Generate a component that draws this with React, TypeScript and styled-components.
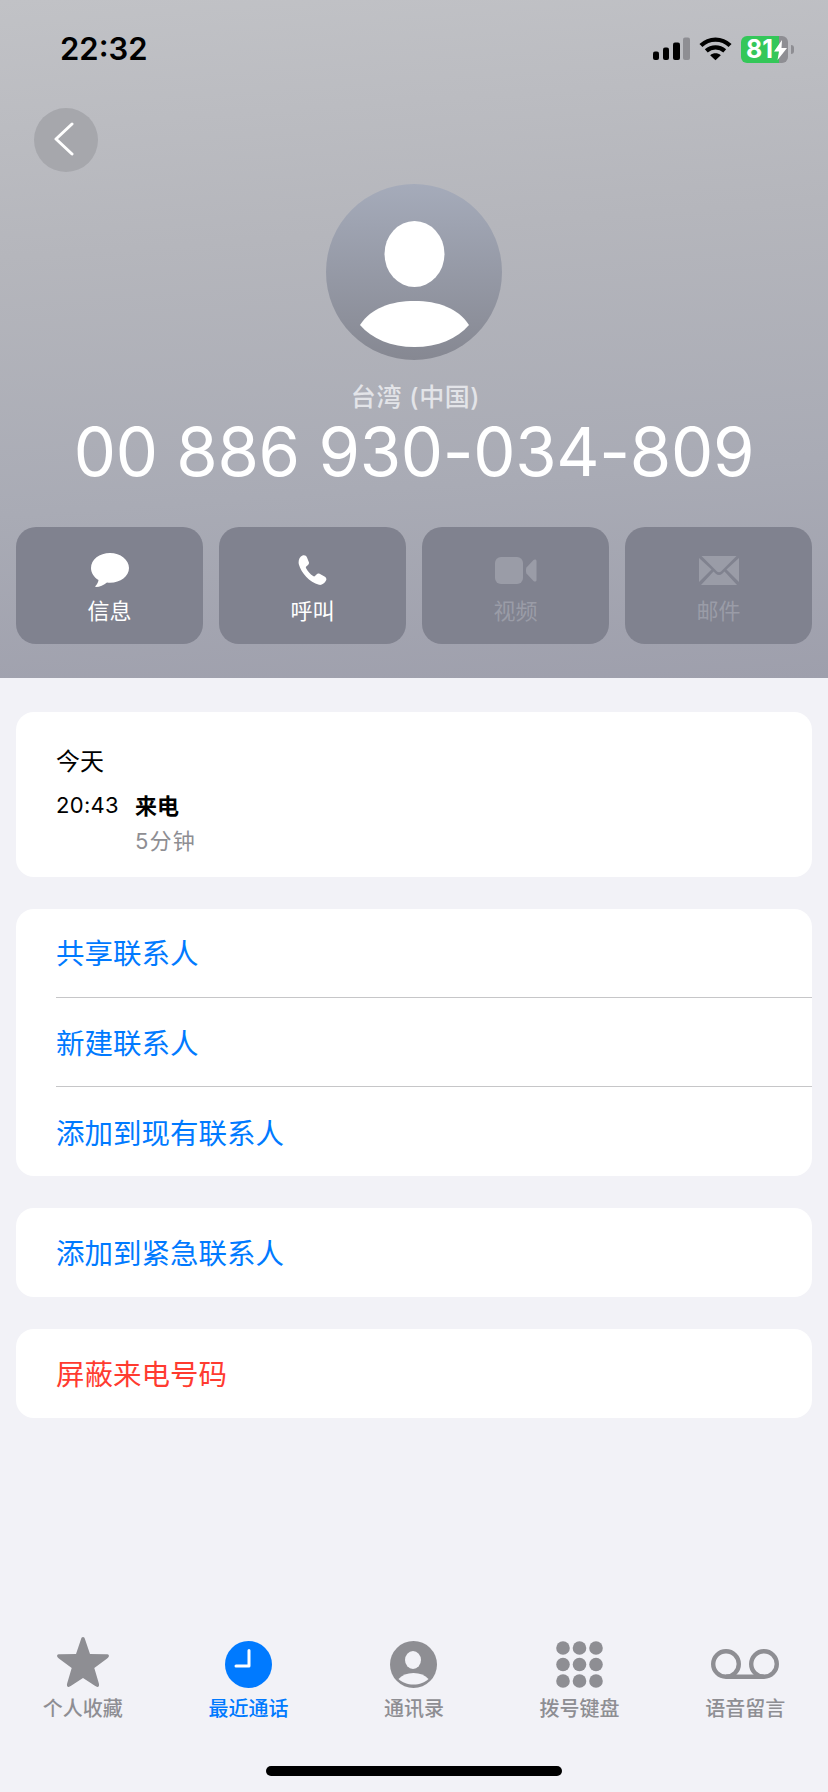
import React from "react";
import styled, { createGlobalStyle } from "styled-components";

const Global = createGlobalStyle`
  html, body { margin: 0; padding: 0; background: #f2f2f7; }
  * { box-sizing: border-box; }
  body { font-family: "Inter", "Noto Sans CJK SC", sans-serif; }
`;

const Page = styled.div`
  width: 828px;
  height: 1792px;
  display: flex;
  flex-direction: column;
  background: #f2f2f7;
  overflow: hidden;
`;

const Header = styled.header`
  height: 678px;
  flex: none;
  display: flex;
  flex-direction: column;
  background: linear-gradient(176deg, #c1c2c6 0%, #b5b6bc 35%, #a9abb5 70%, #9e9fac 100%);
`;

const StatusBar = styled.div`
  height: 108px;
  flex: none;
  padding: 29px 34px 0 60px;
  display: flex;
  justify-content: space-between;
  align-items: flex-start;
`;

const Clock = styled.span`
  font-size: 31px;
  line-height: 40px;
  font-weight: 600;
  color: #000;
`;

const StatusIcons = styled.div`
  display: flex;
  align-items: flex-start;
  padding-top: 7px;
  padding-right: 6px;
  gap: 9px;
`;

const SignalIcon = styled.svg`
  margin-top: 1px;
`;

const Battery = styled.div`
  position: relative;
  width: 47px;
  height: 27px;
  border-radius: 6px;
  background: linear-gradient(90deg, #34c759 0 81%, #8e8e93 81% 100%);
  color: #fff;
  font-size: 25px;
  line-height: 27px;
  font-weight: 700;
  padding-left: 5px;
  &::after {
    content: "";
    position: absolute;
    right: -6px;
    top: 9px;
    width: 3px;
    height: 9px;
    border-radius: 0 3px 3px 0;
    background: #8e8e93;
  }
`;

const BoltIcon = styled.svg`
  position: absolute;
  right: 1px;
  top: 4px;
`;

const BackButton = styled.button`
  width: 64px;
  height: 64px;
  flex: none;
  margin-left: 34px;
  padding: 0 5px 2px 0;
  border: none;
  border-radius: 50%;
  background: #a6a7ac;
  display: flex;
  align-items: center;
  justify-content: center;
`;

const Avatar = styled.div`
  width: 176px;
  height: 176px;
  flex: none;
  margin: 12px auto 0;
  border-radius: 50%;
  overflow: hidden;
  background: linear-gradient(180deg, #a5abba 0%, #868892 100%);
`;

const Region = styled.div`
  margin-top: 19px;
  height: 36px;
  padding-left: 3px;
  text-align: center;
  font-size: 25px;
  line-height: 36px;
  font-weight: 500;
  letter-spacing: 0.6px;
  color: #e3e4e8;
`;

const PhoneNumber = styled.div`
  height: 77px;
  text-align: center;
  font-size: 67px;
  line-height: 74px;
  font-weight: 400;
  letter-spacing: -0.3px;
  color: #fff;
  white-space: nowrap;
`;

const Actions = styled.div`
  margin-top: 35px;
  padding: 0 16px;
  display: grid;
  grid-template-columns: repeat(4, 1fr);
  gap: 16px;
`;

const ActionCard = styled.div<{ $off?: boolean }>`
  height: 117px;
  border-radius: 20px;
  background: #80828f;
  display: flex;
  flex-direction: column;
  align-items: center;
  color: ${(p) => (p.$off ? "#9a9ca7" : "#fff")};
`;

const ActionIcon = styled.div`
  height: 62px;
  padding-top: 24px;
  display: flex;
  align-items: center;
  justify-content: center;
`;

const ActionLabel = styled.span`
  margin-top: 8px;
  font-size: 22px;
  line-height: 28px;
`;

const Main = styled.main`
  flex: 1;
  padding: 34px 16px 0;
  display: flex;
  flex-direction: column;
  gap: 32px;
`;

const Card = styled.section`
  background: #fff;
  border-radius: 18px;
  overflow: hidden;
`;

const CallCard = styled(Card)`
  height: 165px;
  padding: 34px 40px 0;
`;

const CallDay = styled.div`
  font-size: 24px;
  line-height: 32px;
  color: #000;
`;

const CallLine = styled.div`
  margin-top: 11px;
  display: flex;
  align-items: flex-start;
`;

const CallTime = styled.span`
  width: 79px;
  font-size: 22px;
  line-height: 32px;
  letter-spacing: 0.3px;
  color: #000;
`;

const CallInfo = styled.div`
  display: flex;
  flex-direction: column;
  gap: 3px;
  padding-top: 1px;
`;

const CallKind = styled.span`
  font-size: 22px;
  line-height: 32px;
  font-weight: 700;
  color: #000;
`;

const CallLength = styled.span`
  font-size: 22px;
  line-height: 32px;
  color: #8e8e93;
  letter-spacing: 1.2px;
`;

const Row = styled.div<{ $danger?: boolean }>`
  height: 89px;
  margin-left: 40px;
  padding-bottom: 3px;
  display: flex;
  align-items: center;
  font-size: 28.500px;
  color: ${(p) => (p.$danger ? "#ff3b30" : "#007aff")};
  &:first-child:not(:last-child) {
    height: 88px;
  }
  & + & {
    padding-bottom: 1px;
    border-top: 1px solid #c6c6c8;
  }
  & + &:last-child {
    height: 90px;
  }
`;

const TabBar = styled.nav`
  flex: none;
  height: 120px;
  display: grid;
  grid-template-columns: repeat(5, 1fr);
`;

const Tab = styled.div<{ $active?: boolean }>`
  display: flex;
  flex-direction: column;
  align-items: center;
  color: ${(p) => (p.$active ? "#007aff" : "#8e8e93")};
`;

const TabIcon = styled.div`
  height: 64px;
  display: flex;
  align-items: center;
  justify-content: center;
`;

const TabLabel = styled.span`
  font-size: 20px;
  line-height: 26px;
  font-weight: 500;
`;

const HomeArea = styled.div`
  flex: none;
  height: 40px;
  padding-top: 14px;
  display: flex;
  justify-content: center;
`;

const HomeBar = styled.div`
  width: 296px;
  height: 10px;
  border-radius: 5px;
  background: #000;
`;

const Signal = () => (
  <SignalIcon width="37" height="24" viewBox="0 0 37 24">
    <rect x="0" y="14.500" width="6" height="8.500" rx="2" fill="#000" />
    <rect x="10" y="10.500" width="6" height="12.500" rx="2" fill="#000" />
    <rect x="20" y="5.500" width="7" height="17.500" rx="2" fill="#000" />
    <rect x="30" y="0.500" width="7" height="22.500" rx="2" fill="#8e8e93" />
  </SignalIcon>
);

const Wifi = () => (
  <svg width="33" height="25" viewBox="0 0 34 25" fill="none" stroke="#000" strokeWidth="4.400">
    <path d="M2 9.500C10.500 1.200 23.500 1.200 32 9.500" />
    <path d="M7.500 15C13 10 21 10 26.500 15" />
    <path d="M17 24.500 L11.500 19.500 C14.800 16.800 19.200 16.800 22.500 19.500 Z" fill="#000" stroke="none" />
  </svg>
);

const icons = {
  message: (
    <svg width="38" height="34" viewBox="0 0 38 34" fill="currentColor">
      <path d="M19 0C8.500 0 0 6.500 0 15c0 5 3 9.300 7.500 12-.3 2.300-1.500 4.500-3 6-.5.5 0 1 .5 1 3.500 0 8-2 11-4.500 1 .1 2 .2 3 .2 10.500 0 19-6.500 19-14.700S29.500 0 19 0z" />
    </svg>
  ),
  phone: (
    <svg width="30" height="31" viewBox="0 0 30 31" fill="currentColor">
      <path d="M4.500.5C6.500-.3 8.200.5 9 2.500l1.800 4.500c.5 1.300.1 2.300-.8 3l-1.500 1.200c-.7.600-.8 1.300-.4 2.100 1.700 3.200 4 5.800 7 7.800.8.500 1.500.4 2.100-.3l1.300-1.400c.9-1 2-1.200 3.100-.6l4.900 2.700c1.800 1.100 2.300 2.500 1.500 4-1.300 2.700-4.200 5-7 4.300C11.500 27.500 3 17.500.9 9.500-.1 5.500 1.500 1.800 4.500.5z" />
    </svg>
  ),
  video: (
    <svg width="42" height="27" viewBox="0 0 42 27" fill="currentColor">
      <rect x="0" y="0" width="28" height="27" rx="6" />
      <path d="M31.500 10.500 38.500 3C39.800 1.800 41.500 2.500 41.500 4v19c0 1.500-1.700 2.200-3 1l-7-7.500c-.7-1-.7-5 0-6z" />
    </svg>
  ),
  mail: (
    <svg width="40" height="29" viewBox="0 0 40 29" fill="currentColor">
      <path d="M2.500 0h35L22 15.500c-1.200 1.100-2.800 1.100-4 0z" />
      <path d="M0 2v24L12.500 13.500z" />
      <path d="M40 2v24L27.500 13.500z" />
      <path d="M2 29 14.500 15.500l2.300 2.200c1.900 1.700 4.500 1.700 6.400 0l2.300-2.200L38 29z" />
    </svg>
  ),
};

const tabIcons = {
  star: (
    <svg width="52" height="54" viewBox="0 0 52 54" fill="currentColor">
      <path d="M26 0c1 0 1.600.8 2 2.200L33 17l16 .3c2.300 0 3.400.7 2.700 2.400-.3.700-1 1.400-1.900 2.100L37.300 31l4.500 15.300c.5 1.900.3 3-.5 3.400-1 .5-2.100 0-3.400-.9L26 41l-11.900 7.800c-1.300.9-2.400 1.400-3.400.9-.8-.4-1-1.500-.5-3.400L14.700 31 2.200 21.800c-.9-.7-1.600-1.400-1.900-2.100-.7-1.700.4-2.400 2.700-2.400l16-.3L24 2.200C24.400.8 25 0 26 0z" />
    </svg>
  ),
  clock: (
    <svg width="47" height="47" viewBox="0 0 47 47">
      <circle cx="23.500" cy="23.500" r="23.500" fill="currentColor" />
      <path d="M24 9.500V25H11" fill="none" stroke="#fff" strokeWidth="3" strokeLinecap="round" strokeLinejoin="round" />
    </svg>
  ),
  contact: (
    <svg width="47" height="47" viewBox="0 0 47 47">
      <circle cx="23.500" cy="23.500" r="23.500" fill="currentColor" />
      <ellipse cx="23" cy="19" rx="8" ry="9" fill="#f2f2f7" />
      <path d="M8.500 38C12 34 17 32 23.500 32S35 34 38.500 38C35 41.500 29.500 43.500 23.500 43.500S12 41.500 8.500 38z" fill="#f2f2f7" />
    </svg>
  ),
  keypad: (
    <svg width="47" height="47" viewBox="0 0 47 47" fill="currentColor">
      {[7, 23.500, 40].flatMap((y) =>
        [7, 23.500, 40].map((x) => <circle key={`${x}-${y}`} cx={x} cy={y} r="6.800" />),
      )}
    </svg>
  ),
  voicemail: (
    <svg width="68" height="30" viewBox="0 0 68 30" fill="none" stroke="currentColor" strokeWidth="4.400">
      <circle cx="15" cy="15" r="12.800" />
      <circle cx="53" cy="15" r="12.800" />
      <path d="M15 27.800H53" />
    </svg>
  ),
};

const actions: { label: string; icon: keyof typeof icons; off?: boolean }[] = [
  { label: "信息", icon: "message" },
  { label: "呼叫", icon: "phone" },
  { label: "视频", icon: "video", off: true },
  { label: "邮件", icon: "mail", off: true },
];

const tabs: { label: string; icon: keyof typeof tabIcons; active?: boolean }[] = [
  { label: "个人收藏", icon: "star" },
  { label: "最近通话", icon: "clock", active: true },
  { label: "通讯录", icon: "contact" },
  { label: "拨号键盘", icon: "keypad" },
  { label: "语音留言", icon: "voicemail" },
];

export default function App() {
  return (
    <Page>
      <Global />
      <Header>
        <StatusBar>
          <Clock>22:32</Clock>
          <StatusIcons>
            <Signal />
            <Wifi />
            <Battery>
              81
              <BoltIcon width="13" height="20" viewBox="0 0 13 20" fill="#fff">
                <path d="M8 0 0 11.500h5L3.500 20 13 8H7.500z" />
              </BoltIcon>
            </Battery>
          </StatusIcons>
        </StatusBar>
        <BackButton aria-label="返回">
          <svg width="22" height="34" viewBox="0 0 22 34" fill="none" stroke="#fff" strokeWidth="3" strokeLinecap="round" strokeLinejoin="round">
            <path d="M19 2 3 17l16 15" />
          </svg>
        </BackButton>
        <Avatar>
          <svg width="176" height="176" viewBox="0 0 176 176" fill="#fff">
            <ellipse cx="88.500" cy="70" rx="30" ry="33" />
            <path d="M34 141C45 124 65 117 88.500 117S132 124 143 141C131 155 112 163 88.500 163S46 155 34 141z" />
          </svg>
        </Avatar>
        <Region>台湾 (中国)</Region>
        <PhoneNumber>00 886 930-034-809</PhoneNumber>
        <Actions>
          {actions.map((a) => (
            <ActionCard key={a.label} $off={a.off}>
              <ActionIcon>{icons[a.icon]}</ActionIcon>
              <ActionLabel>{a.label}</ActionLabel>
            </ActionCard>
          ))}
        </Actions>
      </Header>
      <Main>
        <CallCard>
          <CallDay>今天</CallDay>
          <CallLine>
            <CallTime>20:43</CallTime>
            <CallInfo>
              <CallKind>来电</CallKind>
              <CallLength>5分钟</CallLength>
            </CallInfo>
          </CallLine>
        </CallCard>
        <Card>
          <Row>共享联系人</Row>
          <Row>新建联系人</Row>
          <Row>添加到现有联系人</Row>
        </Card>
        <Card>
          <Row>添加到紧急联系人</Row>
        </Card>
        <Card>
          <Row $danger>屏蔽来电号码</Row>
        </Card>
      </Main>
      <TabBar>
        {tabs.map((t) => (
          <Tab key={t.label} $active={t.active}>
            <TabIcon>{tabIcons[t.icon]}</TabIcon>
            <TabLabel>{t.label}</TabLabel>
          </Tab>
        ))}
      </TabBar>
      <HomeArea>
        <HomeBar />
      </HomeArea>
    </Page>
  );
}
